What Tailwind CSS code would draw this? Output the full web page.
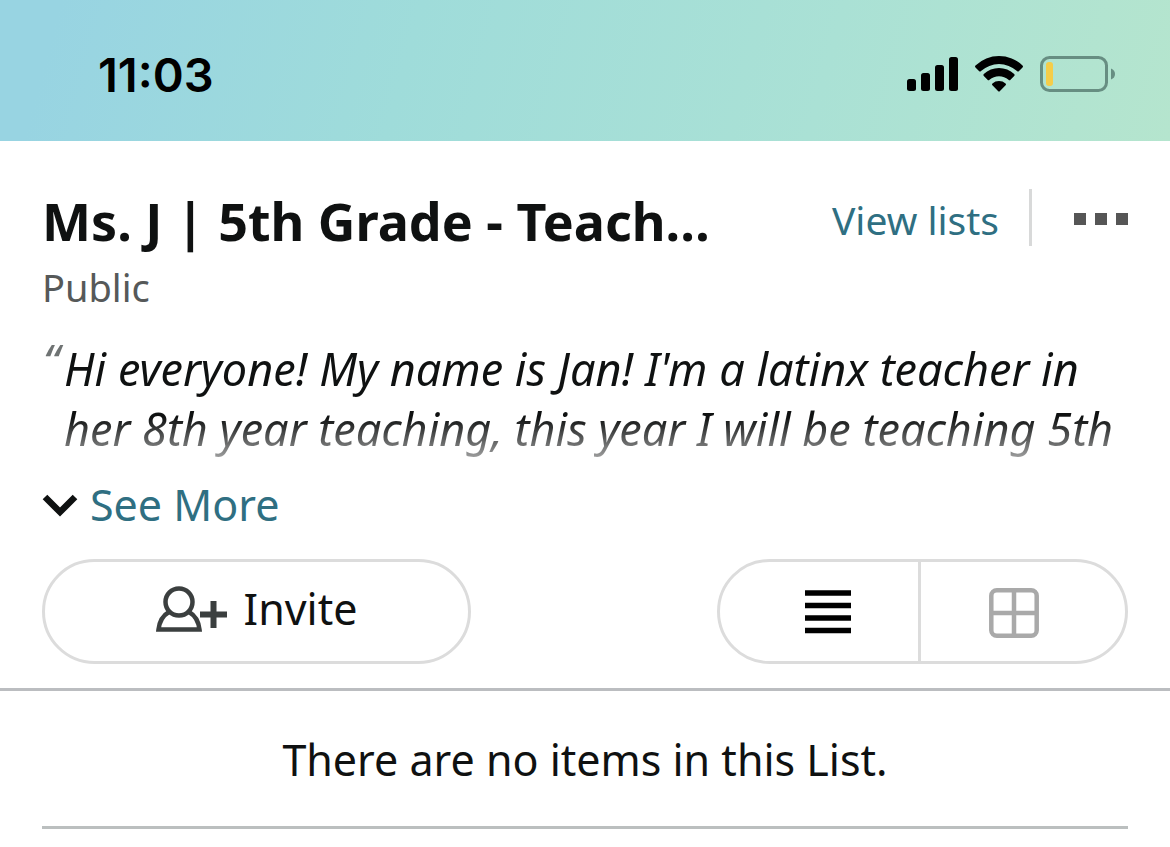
<!DOCTYPE html>
<html lang="en">
<head>
<meta charset="utf-8">
<meta name="viewport" content="width=device-width, initial-scale=1">
<title>Ms. J | 5th Grade - Teacher list</title>
<script src="https://cdn.jsdelivr.net/npm/@tailwindcss/browser@4"></script>
</head>
<body class="bg-white font-['Noto_Sans',sans-serif] text-[#0f1111]">
<header class="flex h-[141px] items-center justify-between bg-linear-[105deg,#98d4e2_5%,#9fdcda_35%,#aae1d5_70%,#b5e5ce_100%] pt-1.5 pr-[54px] pl-[98px] text-black">
  <time class="pt-0.5 font-['Inter',sans-serif] text-[47px] leading-none font-semibold">11:03</time>
  <div class="flex items-center gap-4">
    <svg class="h-9 w-[52px]" viewBox="-1 0 52 36" role="img" aria-label="Signal"><rect x="0" y="23" width="9" height="12" rx="2.500"/><rect x="14" y="17" width="9" height="18" rx="2.500"/><rect x="28" y="9" width="9" height="26" rx="2.500"/><rect x="42" y="1" width="9" height="34" rx="2.500"/></svg>
    <svg class="h-9 w-[50px]" viewBox="0 0 50 36" role="img" aria-label="Wi-Fi"><path d="M1.500 9.500A34 34 0 0 1 48.500 9.500Q49.500 10.500 48.500 11.500L45 15Q44 16 43 15A27 27 0 0 0 7 15Q6 16 5 15L1.500 11.500Q.5 10.500 1.500 9.500Z"/><path d="M9.800 18A22 22 0 0 1 40.200 18Q41.200 19 40.200 20L36.500 23.700Q35.500 24.700 34.500 23.700A14.500 14.500 0 0 0 15.500 23.700Q14.500 24.700 13.500 23.700L9.800 20Q8.800 19 9.800 18Z"/><path d="M18.400 27.400A10 10 0 0 1 31.600 27.400Q32.500 28.400 31.600 29.300L26 35Q25 36 24 35L18.400 29.300Q17.500 28.400 18.400 27.400Z"/></svg>
    <svg class="h-9 w-[76px]" viewBox="0 0 76 36" role="img" aria-label="Battery low"><rect x="1.500" y="1.500" width="65" height="33" rx="8" fill="none" stroke="#678e82" stroke-width="3"/><rect x="6" y="6" width="7" height="24" rx="3" fill="#f5cd49"/><path d="M71 12.500Q75 14 75 18T71 23.500Z" fill="#678e82"/></svg>
  </div>
</header>
<main>
  <section class="px-[42px] pt-12">
    <div class="flex h-[57px] items-center">
      <h1 class="min-w-0 flex-1 pt-1.5 text-[52px] leading-[57px] font-bold whitespace-nowrap">Ms. J | 5th Grade - Teach…</h1>
      <a href="#" class="pt-1 text-[39px] leading-[57px] whitespace-nowrap text-[#2f6f82]">View lists</a>
      <div class="ml-[30px] h-full w-[3px] bg-[#d8d9d9]"></div>
      <button type="button" aria-label="More options" class="ml-[42px] flex gap-[9px] pt-0.5"><span class="size-3 bg-[#565656]"></span><span class="size-3 bg-[#565656]"></span><span class="size-3 bg-[#565656]"></span></button>
    </div>
    <p class="pt-[17px] text-[38px] leading-[48px] text-[#565959]">Public</p>
    <div class="mt-3 flex h-[152px] overflow-hidden mask-linear-[180deg,#000_62%,rgb(0_0_0/0.4)_89%,transparent_100%] pt-4 italic">
      <span class="w-[22px] shrink-0 pl-px text-[46px] leading-[42px] text-[#6f7373]" aria-hidden="true">“</span>
      <blockquote class="text-[45px] leading-[60px] whitespace-nowrap">Hi everyone! My name is Jan! I'm a latinx teacher in<br>her 8th year teaching, this year I will be teaching 5th</blockquote>
    </div>
    <button type="button" class="flex h-[60px] items-center gap-3 text-[43px] leading-[60px] text-[#2f6f82]">
      <svg class="h-6 w-9" viewBox="0 0 36 24" fill="none" stroke="#0f1111" stroke-width="6.500" aria-hidden="true"><path d="M3 4 18 19 33 4"/></svg>
      See More
    </button>
    <div class="mt-6 flex justify-between">
      <button type="button" class="flex h-[105px] w-[429px] items-center justify-center gap-4 rounded-full border-3 border-[#dcdcdc] pb-1 text-[43px]">
        <svg class="h-12 w-[72px]" viewBox="0 1 72 48" fill="none" stroke="#3b3f3f" aria-hidden="true"><circle cx="23" cy="17" r="13.500" stroke-width="4.500"/><path d="M13 27Q4 32 2.500 44.500H43.500Q42 32 33 27" stroke-width="4.500"/><path d="M44 29.500H71M57.500 16V43" stroke-width="6"/></svg>
        Invite
      </button>
      <div class="flex h-[105px] w-[411px] rounded-full border-3 border-[#dcdcdc]">
        <button type="button" aria-label="List view" class="flex w-[201px] items-center justify-center border-r-3 border-[#dcdcdc] pl-[18px]"><svg class="h-11 w-[46px]" viewBox="0 0 46 44" stroke="#000" stroke-width="5.500" aria-hidden="true"><path d="M0 3H46M0 15.500H46M0 28H46M0 40.500H46"/></svg></button>
        <button type="button" aria-label="Grid view" class="flex flex-1 items-center justify-center pt-0.5 pr-[18px]"><svg class="size-[50px]" viewBox="0 0 50 50" fill="none" stroke="#a9a9a9" stroke-width="4.500" aria-hidden="true"><rect x="2.300" y="2.300" width="45.400" height="45.400" rx="5.500"/><path d="M25 2V48M2 25H48"/></svg></button>
      </div>
    </div>
  </section>
  <hr class="mt-6 border-t-3 border-[#bbbdc0]">
  <section class="px-[42px]">
    <p class="border-b-3 border-[#bbbfbf] pt-[39px] pb-9 text-center text-[43px] leading-[60px]">There are no items in this List.</p>
  </section>
</main>
</body>
</html>
